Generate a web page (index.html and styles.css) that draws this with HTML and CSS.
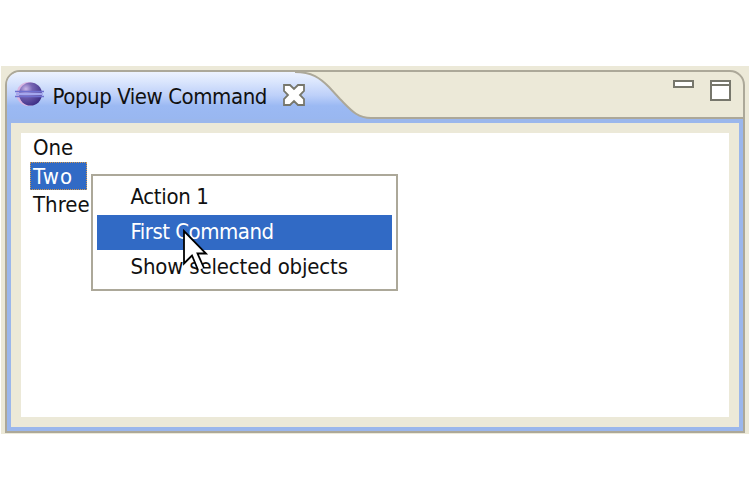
FILE: index.html
```html
<!DOCTYPE html>
<html lang="en">
<head>
<meta charset="utf-8">
<title>Popup View Command</title>
<link rel="stylesheet" href="styles.css">
</head>
<body>
<main class="workbench">
  <section class="view">
    <header class="tabbar">
      <svg class="tab-shape" width="364" height="47" viewBox="0 0 364 47" aria-hidden="true">
        <defs>
          <linearGradient id="tab" x1="0" y1="0" x2="0" y2="1">
            <stop offset="0" stop-color="#edf2fe"/>
            <stop offset=".2" stop-color="#dbe6fd"/>
            <stop offset=".5" stop-color="#bdd0f9"/>
            <stop offset=".72" stop-color="#9bb9f3"/>
            <stop offset="1" stop-color="#99b7f0"/>
          </linearGradient>
        </defs>
        <path d="M0 47V0H288C305 0 313 6 322 15L333 27C344 38 350 46 364 46V47Z" fill="url(#tab)"/>
        <path d="M288 0C305 0 313 6 322 15L333 27C344 38 350 46 364 46" fill="none" stroke="#aca899" stroke-width="2"/>
      </svg>
      <div class="tab">
        <svg class="logo" width="29" height="26" viewBox="0 0 29 26" aria-hidden="true">
          <defs>
            <radialGradient id="orb" cx=".3" cy=".28" r=".8">
              <stop offset="0" stop-color="#c9b7e8"/>
              <stop offset=".35" stop-color="#7866b5"/>
              <stop offset="1" stop-color="#3b2d84"/>
            </radialGradient>
          </defs>
          <circle cx="13.500" cy="13" r="12" fill="#d9b6e2"/>
          <circle cx="15.500" cy="13" r="11.500" fill="url(#orb)"/>
          <path d="M0 10.500H29M0 15.500H29" stroke="#6f70cf" stroke-width="1.500"/>
          <path d="M1 13H28" stroke="#a4a8ee" stroke-width="2.500"/>
        </svg>
        <span class="title">Popup View Command</span>
        <svg class="close" width="22" height="22" viewBox="0 0 22 22" aria-hidden="true">
          <path d="M1 1H7L11 5L15 1H21V7L17 11L21 15V21H15L11 17L7 21H1V15L5 11L1 7Z" fill="#fff" stroke="#77776c" stroke-width="1.800"/>
        </svg>
      </div>
      <div class="controls">
        <i class="minimize"></i>
        <i class="maximize"></i>
      </div>
    </header>
    <div class="client">
      <ul class="list">
        <li>One</li>
        <li class="selected"><span class="two">Two</span></li>
        <li>Three</li>
      </ul>
    </div>
  </section>
</main>
<menu class="popup">
  <li><span class="action">Action 1</span></li>
  <li class="active"><span class="first">First Command</span></li>
  <li><span class="show">Show selected objects</span></li>
</menu>
<svg class="cursor" width="27" height="45" viewBox="0 0 27 45" aria-hidden="true">
  <path d="M2 2V34.500L10 26.500L16 41L22 39L15.500 24.500H24Z" fill="#fff"/>
  <path d="M16 41L10 26.500L2 34.500V2L24 24.500H15.500L22 39" fill="none" stroke="#000" stroke-width="1.800"/>
</svg>
</body>
</html>
```
FILE: styles.css
```css
* { box-sizing: border-box; }
body {
  margin: 0;
  width: 750px;
  height: 500px;
  overflow: hidden;
  background: #fff;
  color: #111;
  font: 22px/29px "DejaVu Sans Condensed", "DejaVu Sans", sans-serif;
  font-stretch: condensed;
  white-space: nowrap;
}
ul, menu { margin: 0; padding: 0; list-style: none; }
svg { display: block; }
.workbench {
  margin: 66px 1px 0;
  height: 368px;
  padding: 4px 4px 1px;
  background: #ece9d8;
}
.view {
  height: 363px;
  display: flex;
  flex-direction: column;
  border: 2px solid #aca899;
  border-radius: 15px 15px 0 0;
  overflow: hidden;
}
.tabbar {
  position: relative;
  flex: none;
  height: 47px;
  display: flex;
  justify-content: space-between;
  background: linear-gradient(#aca899, #aca899) 364px 100% / 100% 2px no-repeat;
}
.tab-shape { position: absolute; left: 0; top: 0; }
.tab { position: relative; display: flex; padding-left: 8px; }
.logo { margin-top: 9px; }
.title { margin: 10px 0 0 8.500px; width: 230.500px; letter-spacing: -0.43px; }
.close { margin-top: 12px; }
.controls { display: flex; gap: 16px; padding: 8px 12px 0 0; }
.minimize { width: 21px; height: 8px; border: 2px solid #77776c; background: #fff; }
.maximize {
  width: 21px;
  height: 21px;
  border: 2px solid #77776c;
  background: linear-gradient(#fff 2px, #77776c 2px 4px, #fff 4px);
}
.client {
  flex: 1;
  border: 4px solid #9bb7ec;
  padding: 10px;
  background: #ece9d8;
}
.list { height: 100%; background: #fff; padding: 1px 0 0 9px; }
.list li { width: 57px; height: 28px; line-height: 28px; padding-left: 3px; }
.list .selected { line-height: 30px; background: #316ac5; color: #fff; outline: 1px dotted #d49a50; outline-offset: -1px; }
.list li:last-child { margin-top: 1px; }
.two { letter-spacing: 1.200px; }
.popup {
  position: absolute;
  left: 91px;
  top: 174px;
  width: 307px;
  height: 117px;
  padding: 4px;
  border: 2px solid #aca899;
  background: #fff;
}
.popup li { height: 35px; line-height: 34px; padding-left: 33.500px; }
.popup .active { line-height: 33px; background: #316ac5; color: #fff; }
.action { letter-spacing: -0.350px; }
.first { letter-spacing: -0.500px; }
.show { letter-spacing: -0.170px; }
.cursor { position: absolute; left: 182px; top: 229px; }
```
